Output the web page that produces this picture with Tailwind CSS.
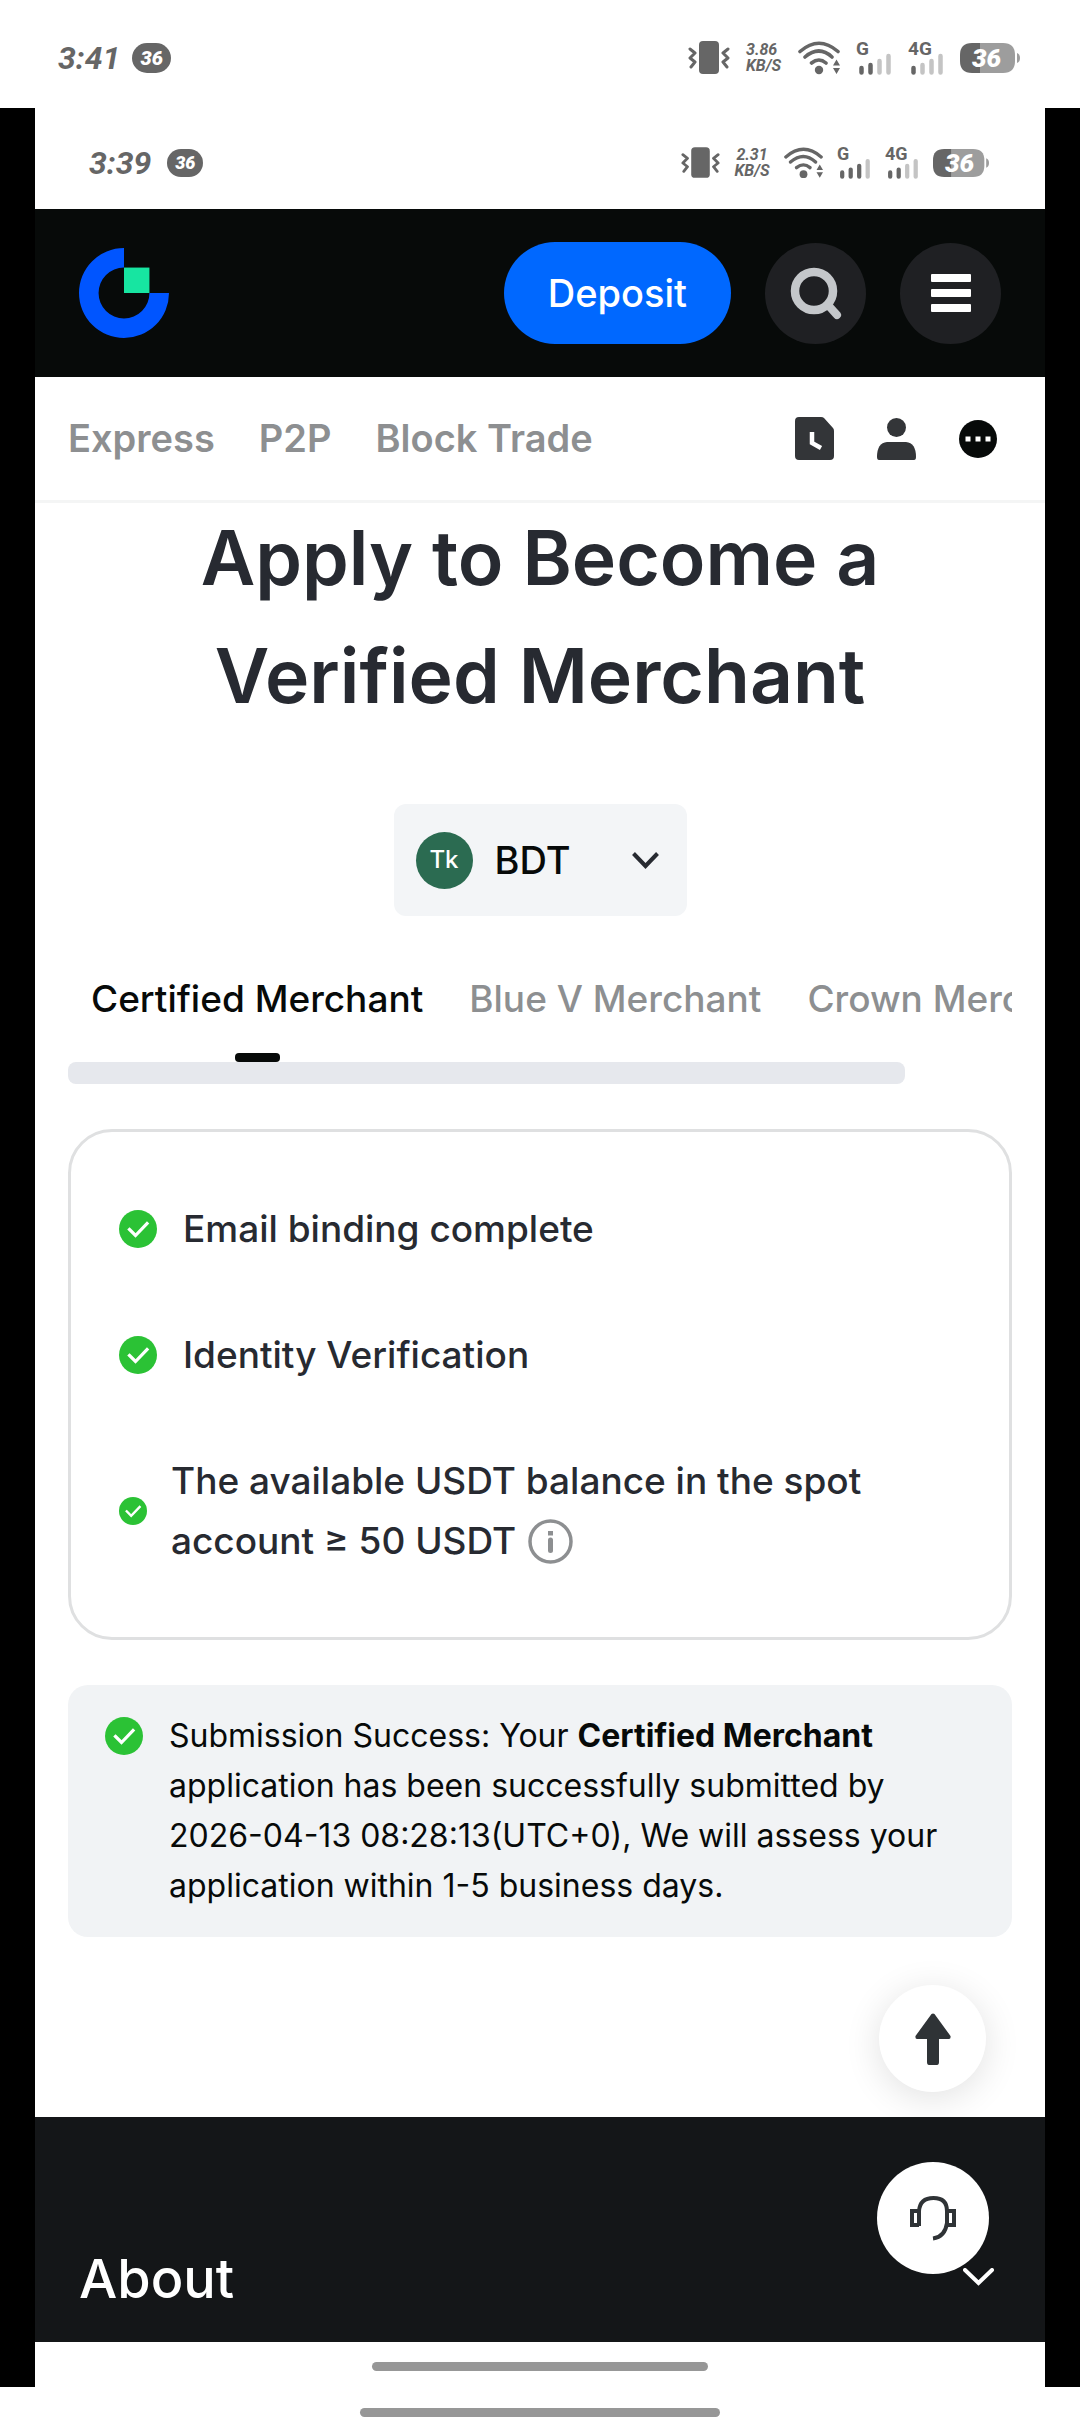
<!DOCTYPE html>
<html lang="en">
<head>
    <meta charset="UTF-8">
    <meta name="viewport" content="width=device-width, initial-scale=1.0">
    <title>Apply to Become a Verified Merchant</title>
    <script src="https://cdn.jsdelivr.net/npm/@tailwindcss/browser@4"></script>
</head>
<body class="bg-white font-['Inter','Liberation_Sans',sans-serif] text-[#070a09]">

  <!-- shared icons -->
  <svg class="hidden" aria-hidden="true">
    <symbol id="check" viewBox="0 0 38 38">
      <circle cx="19" cy="19" r="19" fill="#2bc235"/>
      <path d="M10.500 19.500l6 6L28 13.500" fill="none" stroke="#fff" stroke-width="3.200" stroke-linecap="square"/>
    </symbol>
    <symbol id="vibrate" viewBox="0 0 42 34">
      <rect x="11" y="0" width="20" height="33" rx="4" fill="#666"/>
      <path d="M2 8l5 4-5 5 5 4-4 5M40 8l-5 4 5 5-5 4 4 5" fill="none" stroke="#666" stroke-width="3" stroke-linejoin="round" stroke-linecap="round"/>
    </symbol>
    <symbol id="wifi" viewBox="0 0 42 34">
      <path d="M2 10.500Q21-6 40 10.500M7 16Q21 4 34 16M13.500 22Q21 16 28 22" fill="none" stroke="#666" stroke-width="3.600" stroke-linecap="round"/>
      <circle cx="21" cy="29" r="4.200" fill="#666"/>
      <path d="M35 24.500l3.500-6 3.500 6zM35 27l3.500 6 3.500-6z" fill="#666"/>
    </symbol>
    <symbol id="battery" viewBox="0 0 60 30">
      <path d="M12 0H20V30H12Q0 30 0 18V12Q0 0 12 0z" fill="#666"/>
      <path d="M20 0H43Q55 0 55 12V18Q55 30 43 30H20z" fill="#9d9d9d"/>
      <path d="M57 10Q60 11 60 15T57 20z" fill="#9d9d9d"/>
    </symbol>
  </svg>

  <div class="flex h-[108px] items-center justify-between pt-2 pr-[60px] pl-[58px] text-[#666]">
    <div class="flex items-center gap-3">
      <span class="font-['Roboto',sans-serif] text-[32px] leading-10 font-bold italic">3:41</span>
      <span class="flex h-[30px] w-[39px] items-center justify-center rounded-full bg-[#666] font-['Roboto',sans-serif] text-xl font-black text-white italic">36</span>
    </div>
    <div class="flex items-center gap-4">
      <svg class="h-[34px] w-[42px]"><use href="#vibrate"/></svg>
      <div class="w-9 font-['Roboto',sans-serif] text-base leading-4 font-bold whitespace-nowrap italic">3.86<br>KB/S</div>
      <svg class="h-[34px] w-[42px]"><use href="#wifi"/></svg>
      <svg class="h-[42px] w-9" viewBox="0 -4 36 42">
        <text x="0" y="14" font-family="Roboto, sans-serif" font-size="19" font-weight="700" fill="#666">G</text>
        <path d="M5.500 27v4.500M14.500 24v7.500" stroke="#666" stroke-width="4.500" stroke-linecap="round"/>
        <path d="M23.500 20v11.500M32.500 15v16.500" stroke="#c4c4c4" stroke-width="4.500" stroke-linecap="round"/>
      </svg>
      <svg class="h-[42px] w-9" viewBox="0 -4 36 42">
        <text x="0" y="14" font-family="Roboto, sans-serif" font-size="19" font-weight="700" fill="#666">4G</text>
        <path d="M5.500 27v4.500" stroke="#666" stroke-width="4.500" stroke-linecap="round"/>
        <path d="M14.500 24v7.500M23.500 20v11.500M32.500 15v16.500" stroke="#c4c4c4" stroke-width="4.500" stroke-linecap="round"/>
      </svg>
      <div class="relative h-[30px] w-[60px]">
        <svg class="size-full"><use href="#battery"/></svg>
        <span class="absolute inset-y-0 left-3 font-['Roboto',sans-serif] text-[26px] leading-[30px] font-black text-white italic">36</span>
      </div>
    </div>
  </div>

  <div class="bg-black px-[35px]">
    <div class="bg-white">

      <div class="flex h-[101px] items-center justify-between pt-2 pr-[56px] pl-[54px] text-[#666]">
        <div class="flex items-center gap-4">
          <span class="font-['Roboto',sans-serif] text-[32px] leading-10 font-bold italic">3:39</span>
          <span class="flex h-7 w-9 items-center justify-center rounded-full bg-[#666] font-['Roboto',sans-serif] text-lg font-black text-white italic">36</span>
        </div>
        <div class="flex items-center gap-3.5">
          <svg class="h-8 w-[39px]"><use href="#vibrate"/></svg>
          <div class="w-9 text-center font-['Roboto',sans-serif] text-base leading-4 font-bold whitespace-nowrap italic">2.31<br>KB/S</div>
          <svg class="h-8 w-[39px]"><use href="#wifi"/></svg>
          <svg class="h-10 w-[34px]" viewBox="0 -4 36 42">
            <text x="0" y="14" font-family="Roboto, sans-serif" font-size="19" font-weight="700" fill="#666">G</text>
            <path d="M5.500 27v4.500M14.500 24v7.500M23.500 20v11.500" stroke="#666" stroke-width="4.500" stroke-linecap="round"/>
            <path d="M32.500 15v16.500" stroke="#c4c4c4" stroke-width="4.500" stroke-linecap="round"/>
          </svg>
          <svg class="h-10 w-[34px]" viewBox="0 -4 36 42">
            <text x="0" y="14" font-family="Roboto, sans-serif" font-size="19" font-weight="700" fill="#666">4G</text>
            <path d="M5.500 27v4.500M14.500 24v7.500" stroke="#666" stroke-width="4.500" stroke-linecap="round"/>
            <path d="M23.500 20v11.500M32.500 15v16.500" stroke="#c4c4c4" stroke-width="4.500" stroke-linecap="round"/>
          </svg>
          <div class="relative h-7 w-14">
            <svg class="size-full"><use href="#battery"/></svg>
            <span class="absolute inset-y-0 left-3 font-['Roboto',sans-serif] text-[26px] leading-7 font-black text-white italic">36</span>
          </div>
        </div>
      </div>

      <header class="flex h-[168px] items-center justify-between bg-[#070a09] pr-11 pl-11">
        <a href="#" aria-label="Home">
          <svg class="size-[90px]" viewBox="0 0 92 92">
            <path d="M46 0A46 46 0 1 0 92 46H72A26 26 0 1 1 46 20z" fill="#0055ff"/>
            <rect x="46" y="20" width="26" height="26" fill="#17e5a1"/>
          </svg>
        </a>
        <div class="flex items-center gap-[34px]">
          <button class="h-[102px] rounded-full bg-[#0068ff] px-11 text-[38px] font-medium text-white">Deposit</button>
          <button class="flex size-[101px] items-center justify-center rounded-full bg-[#1f2023]" aria-label="Search">
            <svg class="size-[54px]" viewBox="0 0 54 54" fill="none" stroke="#c4c7ca">
              <circle cx="25" cy="25" r="19" stroke-width="8.500"/>
              <path d="M39 39l9 10" stroke-width="8" stroke-linecap="round"/>
            </svg>
          </button>
          <button class="flex size-[101px] items-center justify-center rounded-full bg-[#1f2023]" aria-label="Menu">
            <svg class="h-[38px] w-10" viewBox="0 0 40 38" fill="#fff">
              <rect width="40" height="8" rx="1"/>
              <rect y="15" width="40" height="8" rx="1"/>
              <rect y="30" width="40" height="8" rx="1"/>
            </svg>
          </button>
        </div>
      </header>

      <nav class="flex h-[126px] items-center justify-between border-b-3 border-[#f4f5f5] pr-12 pl-[33px]">
        <div class="flex gap-11 text-[38px] font-semibold text-[#8d8f91]">
          <a href="#">Express</a>
          <a href="#">P2P</a>
          <a href="#">Block Trade</a>
        </div>
        <div class="flex items-center gap-[43px]">
          <a href="#" aria-label="Orders">
            <svg class="h-[43px] w-[39px]" viewBox="0 0 39 43">
              <path d="M4 0H26Q28 0 29 1L38 11Q39 12 39 14V39Q39 43 35 43H4Q0 43 0 39V4Q0 0 4 0z" fill="#333538"/>
              <path d="M17 15V26L26 31" fill="none" stroke="#fff" stroke-width="4.500"/>
            </svg>
          </a>
          <a href="#" aria-label="Profile">
            <svg class="h-[42px] w-[39px]" viewBox="0 0 39 42" fill="#333538">
              <circle cx="19.500" cy="9.500" r="9.500"/>
              <path d="M10 24H29Q39 25 39 39Q39 42 37 42H2Q0 42 0 39Q0 25 10 24z"/>
            </svg>
          </a>
          <a href="#" aria-label="More">
            <svg class="size-[38px]" viewBox="0 0 38 38">
              <circle cx="19" cy="19" r="19" fill="#070a09"/>
              <path d="M6.500 16.500h5v5h-5zM16.500 16.500h5v5h-5zM26.500 16.500h5v5h-5z" fill="#fff"/>
            </svg>
          </a>
        </div>
      </nav>

      <main class="px-[33px] pb-[180px]">
        <h1 class="-mt-1 text-center text-[75px] leading-[118px] font-semibold text-[#272a31]">Apply to Become a<br>Verified Merchant</h1>

        <div class="mt-[69px] flex justify-center">
          <label class="flex h-28 w-[293px] items-center rounded-xl bg-[#f3f5f7] pr-7 pl-[22px]">
            <span class="flex size-[57px] shrink-0 items-center justify-center rounded-full bg-[#2b6b51] text-2xl font-medium text-white" aria-hidden="true">Tk</span>
            <select class="ml-[22px] w-full appearance-none text-[38px] font-medium" aria-label="Currency">
              <option>BDT</option>
            </select>
            <svg class="h-[17px] w-[27px] shrink-0" viewBox="0 0 27 17" fill="none" stroke="#272a31" stroke-width="4">
              <path d="M1.500 1.500L13.500 14l12-12.500"/>
            </svg>
          </label>
        </div>

        <div class="mt-[41px] flex h-[105px] gap-[46px] overflow-hidden pl-[23px] text-[37px] leading-[84px] font-medium whitespace-nowrap text-[#8d8f91]" role="tablist">
          <button class="flex flex-col items-center justify-between text-[#070a09]" role="tab" aria-selected="true">
            Certified Merchant
            <span class="h-[9px] w-[45px] rounded-sm bg-[#070a09]"></span>
          </button>
          <button class="self-start" role="tab" aria-selected="false">Blue V Merchant</button>
          <button class="self-start" role="tab" aria-selected="false">Crown Merchant</button>
        </div>
        <div class="mr-[107px] h-[22px] rounded-lg bg-[#e6e8ed]"></div>

        <ul class="mt-[45px] flex flex-col gap-[66px] rounded-[44px] border-3 border-[#dfe0e1] px-12 pt-[67px] pb-[66px] text-[37px] leading-[60px] font-medium text-[#272a31]">
          <li class="flex items-center gap-[26px]">
            <svg class="size-[38px] shrink-0"><use href="#check"/></svg>
            Email binding complete
          </li>
          <li class="flex items-center gap-[26px]">
            <svg class="size-[38px] shrink-0"><use href="#check"/></svg>
            Identity Verification
          </li>
          <li class="flex items-center gap-6">
            <svg class="size-7 shrink-0"><use href="#check"/></svg>
            <div>
              The available USDT balance in the spot<br>
              <span class="flex items-center gap-3">account ≥ 50 USDT
                <svg class="size-[45px]" viewBox="0 0 45 45" fill="none" stroke="#8d8f91">
                  <circle cx="22.500" cy="22.500" r="20.500" stroke-width="3.500"/>
                  <path d="M22.500 21v10.500" stroke-width="5" stroke-linecap="round"/>
                  <path d="M22.500 12v4.500" stroke-width="5"/>
                </svg>
              </span>
            </div>
          </li>
        </ul>

        <div class="mt-[45px] flex gap-[26px] rounded-[20px] bg-[#f1f3f5] px-[37px] py-[26px] text-[32px] leading-[50px]">
          <svg class="mt-1.5 size-[38px] shrink-0"><use href="#check"/></svg>
          <p>Submission Success: Your <b>Certified Merchant</b><br>application has been successfully submitted by<br>2026-04-13 08:28:13(UTC+0), We will assess your<br>application within 1-5 business days.</p>
        </div>
      </main>

      <footer class="relative flex h-[225px] items-end justify-between bg-[#141618] pr-[51px] pb-[30px] pl-11">
        <h2 class="text-[54px] leading-[66px] font-medium text-white">About</h2>
        <svg class="mb-[26px] h-[18px] w-[31px]" viewBox="0 0 31 18" fill="none" stroke="#fff" stroke-width="4" stroke-linecap="round">
          <path d="M2 2l13.500 13L29 2"/>
        </svg>

        <!-- floating actions -->
        <button class="absolute -top-[132px] right-[59px] flex size-[107px] items-center justify-center rounded-full bg-white shadow-[0_6px_36px_rgba(0,0,0,0.12)] [clip-path:inset(-50px_-50px_-25px_-50px)]" aria-label="Back to top">
          <svg class="h-[52px] w-9" viewBox="0 0 36 52" fill="#2f3336">
            <path d="M16.500 1Q18 0 19.500 1L35.500 23Q36 26 34 26H24V49Q24 52 22 52H14Q12 52 12 49V26H2Q0 26 .5 23z"/>
          </svg>
        </button>
        <button class="absolute top-[45px] right-14 flex size-28 items-center justify-center rounded-full bg-white" aria-label="Customer support">
          <svg class="h-[46px] w-12" viewBox="0 0 48 46" fill="none" stroke="#2f3336" stroke-width="4">
            <path d="M10 31V16Q11 3 24.500 3T38 16V28Q36 42 24 43.500"/>
            <path d="M10 16H3V30H10M38 16H45V30H38"/>
          </svg>
        </button>
      </footer>

      <div class="flex h-[45px] justify-center pt-5">
        <div class="h-[9px] w-1/3 rounded-full bg-[#979797]"></div>
      </div>
    </div>
  </div>

  <div class="flex h-12 justify-center pt-[21px]">
    <div class="h-[9px] w-1/3 rounded-full bg-[#979797]"></div>
  </div>

</body>
</html>
